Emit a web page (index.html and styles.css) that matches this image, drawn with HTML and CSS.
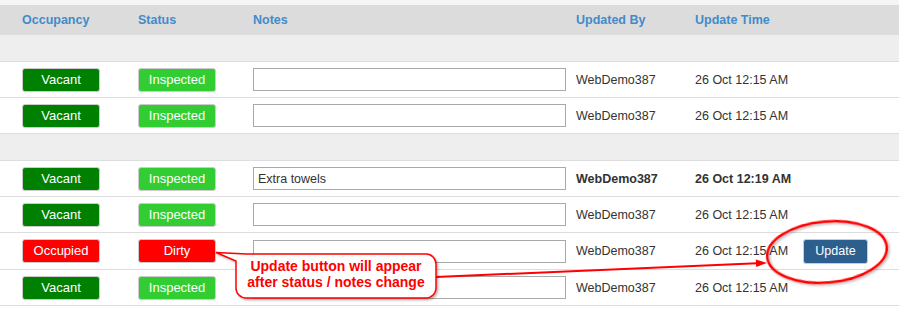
FILE: index.html
```html
<!DOCTYPE html>
<html lang="en">

<head>
    <meta charset="UTF-8">
    <meta name="viewport" content="width=device-width, initial-scale=1.0">
    <title>Housekeeping</title>
    <link rel="stylesheet" href="styles.css">
</head>

<body>
    <div class="top-strip"></div>
    <table class="rooms">
        <colgroup>
            <col class="col-occ">
            <col class="col-status">
            <col class="col-notes">
            <col class="col-by">
            <col class="col-time">
            <col>
        </colgroup>
        <thead>
            <tr>
                <th class="first">Occupancy</th>
                <th>Status</th>
                <th>Notes</th>
                <th>Updated By</th>
                <th>Update Time</th>
                <th></th>
            </tr>
        </thead>
        <tbody>
            <tr class="group"><td colspan="6"></td></tr>
            <tr>
                <td class="first"><span class="badge vacant">Vacant</span></td>
                <td><span class="badge inspected">Inspected</span></td>
                <td><input type="text" class="note"></td>
                <td>WebDemo387</td>
                <td>26 Oct 12:15 AM</td>
                <td></td>
            </tr>
            <tr>
                <td class="first"><span class="badge vacant">Vacant</span></td>
                <td><span class="badge inspected">Inspected</span></td>
                <td><input type="text" class="note"></td>
                <td>WebDemo387</td>
                <td>26 Oct 12:15 AM</td>
                <td></td>
            </tr>
            <tr class="group"><td colspan="6"></td></tr>
            <tr class="changed">
                <td class="first"><span class="badge vacant">Vacant</span></td>
                <td><span class="badge inspected">Inspected</span></td>
                <td><input type="text" class="note" value="Extra towels"></td>
                <td>WebDemo387</td>
                <td>26 Oct 12:19 AM</td>
                <td></td>
            </tr>
            <tr>
                <td class="first"><span class="badge vacant">Vacant</span></td>
                <td><span class="badge inspected">Inspected</span></td>
                <td><input type="text" class="note"></td>
                <td>WebDemo387</td>
                <td>26 Oct 12:15 AM</td>
                <td></td>
            </tr>
            <tr class="tall">
                <td class="first"><span class="badge occupied">Occupied</span></td>
                <td><span class="badge dirty">Dirty</span></td>
                <td><input type="text" class="note"></td>
                <td>WebDemo387</td>
                <td>26 Oct 12:15 AM</td>
                <td><button type="button" class="update-btn">Update</button></td>
            </tr>
            <tr>
                <td class="first"><span class="badge vacant">Vacant</span></td>
                <td><span class="badge inspected">Inspected</span></td>
                <td><input type="text" class="note"></td>
                <td>WebDemo387</td>
                <td>26 Oct 12:15 AM</td>
                <td></td>
            </tr>
        </tbody>
    </table>

    <!-- annotation layer drawn over the table -->
    <svg class="annotations" width="899" height="312" viewBox="0 0 899 312">
        <defs>
            <filter id="shade" x="-10%" y="-20%" width="130%" height="150%">
                <feDropShadow dx="1.5" dy="1.5" stdDeviation="1" flood-color="#000" flood-opacity="0.3" />
            </filter>
        </defs>
        <line x1="436" y1="277" x2="757" y2="263.3" stroke="#f00" stroke-width="2" />
        <polygon points="767,262.9 756.2,267 755.8,259.6" fill="#f00" />
        <path d="M246 254 H426 A10 10 0 0 1 436 264 V288 A10 10 0 0 1 426 298 H246 A10 10 0 0 1 236 288 V261 L216 252.5 Z"
            fill="#fff" stroke="#f00" stroke-width="1.5" filter="url(#shade)" />
        <ellipse cx="827" cy="252" rx="60" ry="30.5" transform="rotate(-5 827 252)" fill="none" stroke="#f00"
            stroke-width="2.5" filter="url(#shade)" />
    </svg>
    <div class="callout-text">Update button will appear<br>after status / notes change</div>
</body>

</html>
```

FILE: styles.css
```css
body {
    margin: 0;
    font-family: "Liberation Sans", Arial, sans-serif;
    font-size: 12.5px;
    color: #333;
    background-color: #fff;
    position: relative;
}

.top-strip {
    height: 5px;
    background-color: #f5f5f5;
}

.rooms {
    width: 899px;
    border-collapse: collapse;
    table-layout: fixed;
}

.col-occ {
    width: 138px;
}

.col-status {
    width: 115px;
}

.col-notes {
    width: 323px;
}

.col-by {
    width: 119px;
}

.col-time {
    width: 108px;
}

.rooms th {
    height: 30px;
    padding: 0;
    background-color: #dcdcdc;
    color: #428bca;
    font-weight: bold;
    text-align: left;
}

.rooms td {
    height: 35px;
    padding: 0;
    border-bottom: 1px solid #ddd;
    vertical-align: middle;
    white-space: nowrap;
}

.rooms tr.tall td {
    height: 36px;
}

.rooms .first {
    padding-left: 22px;
}

.rooms tr.group td {
    height: 26px;
    background-color: #eee;
}

.rooms tr.changed td {
    font-weight: bold;
}

.badge {
    display: block;
    width: 78px;
    height: 24px;
    line-height: 22px;
    box-sizing: border-box;
    border: 1px solid #ccc;
    border-radius: 3px;
    color: #fff;
    text-align: center;
    font-size: 13px;
    font-weight: normal;
}

.vacant {
    background-color: #008000;
}

.inspected {
    background-color: #32cd32;
}

.occupied,
.dirty {
    background-color: #f00;
}

input.note {
    display: block;
    width: 313px;
    height: 23px;
    margin: 0;
    padding: 0 4px;
    box-sizing: border-box;
    border: 1px solid #a9a9a9;
    font-family: "Liberation Sans", Arial, sans-serif;
    font-size: 12.5px;
    font-weight: normal;
    color: #333;
}

.update-btn {
    display: block;
    width: 65px;
    height: 25px;
    padding: 0;
    border: 1px solid #c5cdd6;
    border-radius: 3px;
    background-color: #2c5f8d;
    color: #fff;
    font-family: "Liberation Sans", Arial, sans-serif;
    font-size: 12.5px;
    cursor: pointer;
}

.annotations {
    position: absolute;
    left: 0;
    top: 0;
    pointer-events: none;
}

.callout-text {
    position: absolute;
    left: 236px;
    top: 258px;
    width: 200px;
    text-align: center;
    line-height: 16px;
    font-size: 14px;
    font-weight: bold;
    color: #f00;
}
```
